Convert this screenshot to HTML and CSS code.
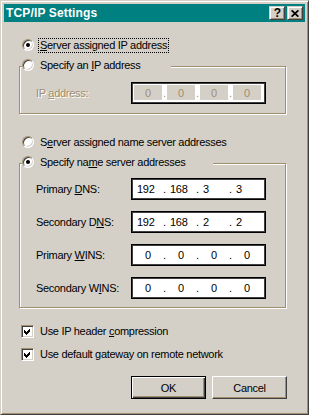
FILE: index.html
```html
<!DOCTYPE html>
<html>
<head>
<meta charset="utf-8">
<link rel="stylesheet" href="styles.css">
</head>
<body>
<div class="window">
  <div class="titlebar">
    <span class="title">TCP/IP Settings</span>
    <div class="caption-btns">
      <span class="cbtn help">?</span>
      <span class="cbtn close"><svg width="8" height="7" viewBox="0 0 8 7"><path d="M0.6 0.3 L7.4 6.7 M7.4 0.3 L0.6 6.7" stroke="#000" stroke-width="1.7" fill="none"/></svg></span>
    </div>
  </div>
  <div class="body">
    <div class="rrow r1"><span class="radio checked"></span><span class="label focus"><u>S</u>erver assigned IP address</span></div>

    <div class="group g1">
      <div class="legend lg1"><span class="radio"></span><span class="label">Specify an <u>I</u>P address</span></div>
      <div class="frow">
        <span class="flabel disabled">IP <u>a</u>ddress:</span>
        <div class="ip off">
          <span class="seg">0</span><span class="dot">.</span><span class="seg">0</span><span class="dot">.</span><span class="seg">0</span><span class="dot">.</span><span class="seg">0</span>
        </div>
      </div>
    </div>

    <div class="rrow r3"><span class="radio"></span><span class="label">S<u>e</u>rver assigned name server addresses</span></div>

    <div class="group g2">
      <div class="legend lg2"><span class="radio checked"></span><span class="label">Specify na<u>m</u>e server addresses</span></div>
      <div class="frow">
        <span class="flabel">Primary <u>D</u>NS:</span>
        <div class="ip left">
          <span class="seg">192</span><span class="dot">.</span><span class="seg">168</span><span class="dot">.</span><span class="seg">3</span><span class="dot">.</span><span class="seg">3</span>
        </div>
      </div>
      <div class="frow">
        <span class="flabel">Secondary D<u>N</u>S:</span>
        <div class="ip left">
          <span class="seg">192</span><span class="dot">.</span><span class="seg">168</span><span class="dot">.</span><span class="seg">2</span><span class="dot">.</span><span class="seg">2</span>
        </div>
      </div>
      <div class="frow">
        <span class="flabel">Primary <u>W</u>INS:</span>
        <div class="ip">
          <span class="seg">0</span><span class="dot">.</span><span class="seg">0</span><span class="dot">.</span><span class="seg">0</span><span class="dot">.</span><span class="seg">0</span>
        </div>
      </div>
      <div class="frow">
        <span class="flabel">Secondary W<u>I</u>NS:</span>
        <div class="ip">
          <span class="seg">0</span><span class="dot">.</span><span class="seg">0</span><span class="dot">.</span><span class="seg">0</span><span class="dot">.</span><span class="seg">0</span>
        </div>
      </div>
    </div>

    <div class="crow c1"><span class="check"><svg width="9" height="9" viewBox="0 0 9 9"><polygon points="1,3 3,5 7,1 7,4 3,8 1,6" fill="#000"/></svg></span><span class="label">Use IP header <u>c</u>ompression</span></div>
    <div class="crow c2"><span class="check"><svg width="9" height="9" viewBox="0 0 9 9"><polygon points="1,3 3,5 7,1 7,4 3,8 1,6" fill="#000"/></svg></span><span class="label">Use default gateway on remote network</span></div>

    <div class="buttons">
      <span class="btn default">OK</span>
      <span class="btn">Cancel</span>
    </div>
  </div>
</div>
</body>
</html>
```
FILE: styles.css
```css
html, body {
  margin: 0;
  padding: 0;
}
body {
  background: #d4d0c8;
  font-family: "Liberation Sans", Arial, sans-serif;
  font-size: 11px;
  letter-spacing: -0.3px;
  color: #000;
}
u {
  text-decoration: underline;
  text-underline-offset: 1px;
}
.window {
  width: 309px;
  height: 415px;
  box-sizing: border-box;
  border: 1px solid;
  border-color: #d4d0c8 #404040 #404040 #d4d0c8;
  box-shadow: inset 1px 1px #ffffff, inset -1px -1px #a08e6e;
  padding: 3px;
  display: flex;
  flex-direction: column;
  background: #d4d0c8;
}
.titlebar {
  height: 18px;
  flex: 0 0 18px;
  background: #008080;
  display: flex;
  align-items: center;
  justify-content: space-between;
  padding: 0 2px;
}
.title {
  color: #fff;
  font-weight: bold;
  font-size: 12px;
  letter-spacing: 0.15px;
  line-height: 18px;
}
.caption-btns {
  display: flex;
  gap: 2px;
}
.cbtn {
  width: 16px;
  height: 14px;
  box-sizing: border-box;
  background: #d4d0c8;
  border: 1px solid;
  border-color: #d4d0c8 #404040 #404040 #d4d0c8;
  box-shadow: inset 1px 1px #fff, inset -1px -1px #a08e6e;
  display: flex;
  align-items: center;
  justify-content: center;
}
.help {
  font-weight: bold;
  font-size: 12px;
  line-height: 12px;
  letter-spacing: 0;
  padding-left: 1px;
}
.close svg {
  display: block;
}
.body {
  flex: 1;
  padding: 15px 18px 0 15px;
  display: flex;
  flex-direction: column;
}
.rrow {
  height: 16px;
  display: flex;
  align-items: center;
  margin-left: 3px;
}
.r3 {
  margin-top: 20px;
}
.radio {
  width: 12px;
  height: 12px;
  box-sizing: border-box;
  border-radius: 50%;
  background: #fff;
  border: 1px solid;
  border-color: #a08e6e #fff #fff #a08e6e;
  box-shadow: inset 1px 1px #404040, inset -1px -1px #d4d0c8;
  margin-right: 4px;
  display: flex;
  align-items: center;
  justify-content: center;
  flex: 0 0 12px;
}
.radio.checked::after {
  content: "";
  width: 4px;
  height: 4px;
  border-radius: 50%;
  background: #000;
}
.label {
  border: 1px dotted transparent;
  padding: 0 1px;
  line-height: 13px;
  white-space: nowrap;
}
.label.focus {
  border-color: #000;
}
.group {
  position: relative;
  width: 267px;
  box-sizing: border-box;
  border: 1px solid #a08e6e;
  box-shadow: inset 1px 1px #fff, 1px 1px #fff;
  margin-top: 13px;
}
.g1 {
  padding: 15px 0 9px 0;
}
.g2 {
  padding: 14px 0 8px 0;
  display: flex;
  flex-direction: column;
  gap: 11px;
}
.legend {
  position: absolute;
  top: -10px;
  left: 2px;
  height: 16px;
  display: flex;
  align-items: center;
  background: #d4d0c8;
  box-sizing: border-box;
}
.lg1 {
  width: 149px;
}
.lg2 {
  width: 191px;
}
.frow {
  display: flex;
  align-items: center;
  height: 22px;
  padding-left: 16px;
}
.flabel {
  width: 95px;
  flex: 0 0 95px;
  white-space: nowrap;
}
.disabled {
  color: #a08e6e;
  text-shadow: 1px 1px #fff;
}
.ip {
  width: 135px;
  height: 22px;
  box-sizing: border-box;
  border: 1px solid #000;
  box-shadow: inset 1px 1px #404040, inset -1px -1px #404040;
  background: #fff;
  padding: 2px;
  display: flex;
  align-items: stretch;
}
.seg {
  width: 28px;
  flex: 0 0 28px;
  text-align: center;
  line-height: 17px;
}
.ip.left .seg {
  text-align: left;
  padding-left: 3px;
  box-sizing: border-box;
}
.dot {
  width: 5px;
  flex: 0 0 5px;
  text-align: center;
  line-height: 17px;
  letter-spacing: 0;
}
.ip.off .seg {
  background: #d4d0c8;
  color: #a08e6e;
  margin: 0 0 1px 0;
}
.ip.off .dot {
  color: #a08e6e;
}
.crow {
  height: 15px;
  display: flex;
  align-items: center;
  margin-left: 2px;
}
.c1 {
  margin-top: 16px;
}
.c2 {
  margin-top: 8px;
}
.check {
  width: 13px;
  height: 13px;
  box-sizing: border-box;
  border: 1px solid;
  border-color: #a08e6e #fff #fff #a08e6e;
  box-shadow: inset 1px 1px #404040, inset -1px -1px #d4d0c8;
  background: #fff;
  padding: 1px;
  margin-right: 4px;
  flex: 0 0 13px;
}
.check svg {
  display: block;
  shape-rendering: crispEdges;
}
.buttons {
  display: flex;
  justify-content: flex-end;
  gap: 6px;
  margin-top: 14px;
}
.btn {
  width: 75px;
  height: 23px;
  box-sizing: border-box;
  display: flex;
  align-items: center;
  justify-content: center;
  border: 1px solid;
  border-color: #fff #404040 #404040 #fff;
  box-shadow: inset -1px -1px #a08e6e;
  background: #d4d0c8;
}
.btn.default {
  border: 1px solid #000;
  box-shadow: inset 1px 1px #fff, inset -1px -1px #404040, inset -2px -2px #a08e6e;
}
```
